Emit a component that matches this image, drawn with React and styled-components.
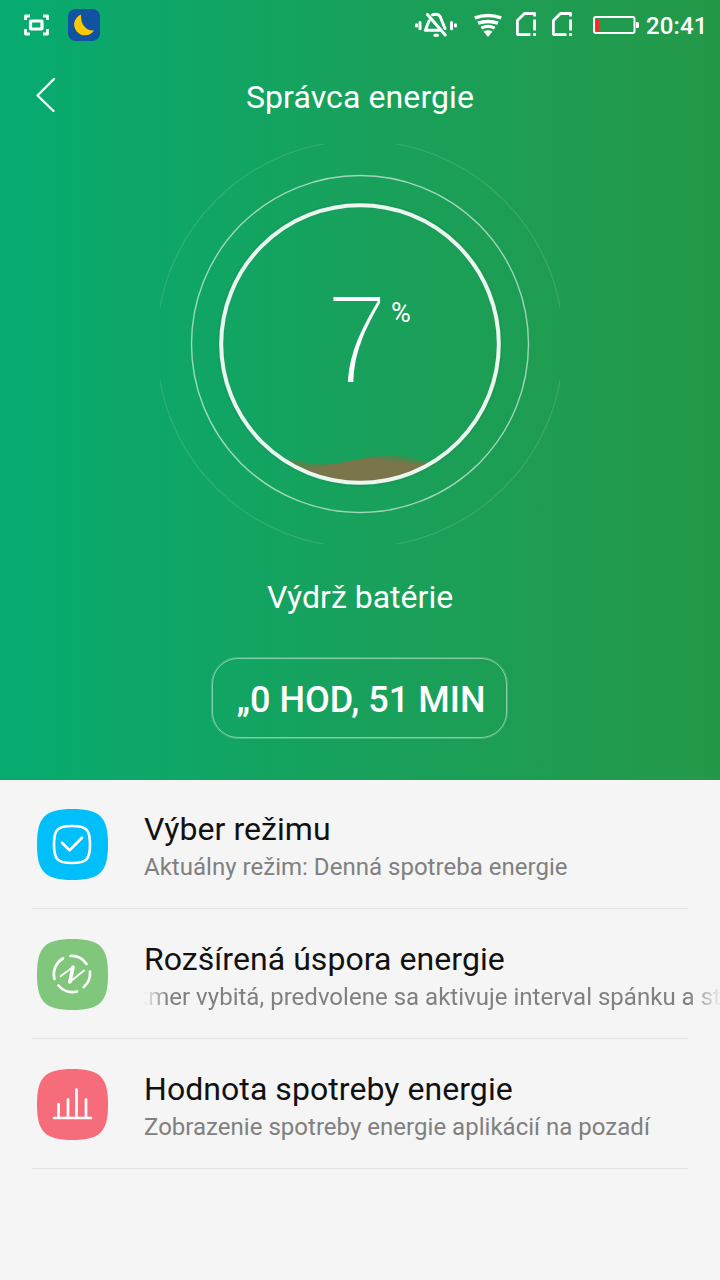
import React from "react";
import styled, { createGlobalStyle } from "styled-components";

const GlobalStyle = createGlobalStyle`
  body {
    margin: 0;
    background-color: #f5f5f5;
    font-family: Roboto, "Liberation Sans", sans-serif;
  }
`;

const Screen = styled.div`
  width: 720px;
  height: 1280px;
  overflow: hidden;
  background-color: #f5f5f5;
`;

const Hero = styled.header`
  display: flex;
  flex-direction: column;
  align-items: center;
  height: 780px;
  color: #ffffff;
  background-image: linear-gradient(90deg, #06ab70 0%, #18a15c 50%, #249848 100%);
`;

const StatusBar = styled.div`
  display: flex;
  align-items: center;
  justify-content: space-between;
  box-sizing: border-box;
  width: 100%;
  height: 50px;
  padding: 0 14px 0 24px;
`;

const StatusGroup = styled.div`
  display: flex;
  align-items: center;
`;

const StatusIcon = styled.svg`
  display: block;
  margin-right: ${(props) => props.$gap || 0}px;
`;

const Clock = styled.span`
  width: 60px;
  padding-top: 2px;
  font-size: 24px;
  font-weight: 500;
  line-height: 48px;
  letter-spacing: 0.1px;
  white-space: nowrap;
`;

const TitleBar = styled.div`
  display: grid;
  grid-template-columns: 92px 1fr 92px;
  align-items: center;
  width: 100%;
  height: 94px;
`;

const BackButton = styled.button`
  height: 94px;
  padding: 0 0 2px 34px;
  border: 0;
  background: none;
  text-align: left;
`;

const Title = styled.h1`
  margin: 0;
  font-size: 32px;
  font-weight: 400;
  line-height: 94px;
  letter-spacing: 0.1px;
  text-align: center;
`;

const Gauge = styled.div`
  position: relative;
  width: 400px;
  height: 400px;
`;

const GaugeDrawing = styled.svg`
  display: block;
`;

const Reading = styled.div`
  position: absolute;
  top: 127px;
  left: 165px;
  display: flex;
  align-items: flex-start;
`;

/* the outline in the background colour thins the digit down to a hairline */
const Level = styled.span`
  width: 66px;
  font-family: "Liberation Sans", Arial, sans-serif;
  font-size: 131px;
  line-height: 138px;
  transform: scaleX(0.87);
  transform-origin: 0 0;
  -webkit-text-stroke: 5.9px #18a15c;
`;

const Percent = styled.span`
  padding-top: 25px;
  font-size: 27px;
  line-height: 34px;
`;

const Caption = styled.p`
  margin: 34px 0 0;
  font-size: 32px;
  line-height: 38px;
`;

const TimeLeft = styled.div`
  box-sizing: border-box;
  width: 295px;
  height: 80px;
  margin: 42px 1px 0 0;
  border: 1px solid rgba(255, 255, 255, 0.48);
  border-radius: 26px;
  box-shadow: 0 0 0 1px rgba(255, 255, 255, 0.2);
  font-size: 36px;
  font-weight: 500;
  line-height: 82px;
  text-align: center;
  text-indent: 3px;
  white-space: nowrap;
`;

const List = styled.ul`
  margin: 0;
  padding: 0 0 0 32px;
  list-style: none;
`;

const Item = styled.li`
  display: flex;
  box-sizing: border-box;
  height: 130px;
  padding: 28px 0 0 4px;
  background: linear-gradient(#e2e2e2, #e2e2e2) 0 128px / 656px 1px no-repeat;
`;

const Badge = styled.svg`
  flex: none;
  width: 72px;
  height: 72px;
  margin-right: 36px;
`;

const ItemText = styled.div`
  flex: 1;
  min-width: 0;
`;

const ItemTitle = styled.h2`
  margin: 2px 0 0;
  color: #111111;
  font-size: 32px;
  font-weight: 400;
  line-height: 38px;
  letter-spacing: 0.06px;
`;

const ItemNote = styled.p`
  display: flex;
  margin: 4px 0 0;
  overflow: hidden;
  color: #808080;
  font-size: 24px;
  line-height: 30px;
  letter-spacing: 0.02px;
  white-space: nowrap;
  ${(props) =>
    props.$scrolling &&
    "mask-image: linear-gradient(90deg, transparent 0, #000 24px, #000 545px, transparent 578px);"}
`;

const NoteText = styled.span`
  margin-left: ${(props) => props.$shift || 0}px;
`;

const squircle =
  "M36.5 1C64 1 72 9 72 36.5C72 64 64 72 36.5 72C9 72 1 64 1 36.5C1 9 9 1 36.5 1Z";

const SimIcon = ({ gap }) => (
  <StatusIcon $gap={gap} width="20" height="26" viewBox="0 0 20 26" fill="none" stroke="#fff" strokeWidth="2.8">
    <path d="M18.6 4.5V1.5H8.5L1.4 8.5V21.5Q1.4 22.7 2.8 22.7H14.5" strokeLinejoin="round" />
    <path d="M18.6 7.5V18.5M18.6 21V24" />
  </StatusIcon>
);

const items = [
  {
    title: "Výber režimu",
    note: "Aktuálny režim: Denná spotreba energie",
    color: "#00bffa",
    icon: (
      <>
        <path d="M36 18C50.5 18 54 21.5 54 36.5C54 51.5 50.5 55 36 55C21.5 55 18 51.5 18 36.5C18 21.5 21.5 18 36 18Z" />
        <path d="M26 34.8L33.6 42.3L46 29.8" />
      </>
    ),
  },
  {
    title: "Rozšírená úspora energie",
    note: "kmer vybitá, predvolene sa aktivuje interval spánku a st",
    scrolling: true,
    shift: -8,
    color: "#81c77b",
    icon: (
      <>
        <path d="M34.5 18A18.3 18.3 0 0 1 50.5 26M54 33.5A18.3 18.3 0 0 1 47.8 49M41 53.5A18.3 18.3 0 0 1 22.5 47.5M18.5 41A18.3 18.3 0 0 1 27 20.5" />
        <path d="M24.5 38.3L37.5 28.8L33.5 44.300L48 32.500" strokeWidth="1.8" />
        <path d="M37 29.300L33.800 43.800" strokeWidth="3.6" />
      </>
    ),
  },
  {
    title: "Hodnota spotreby energie",
    note: "Zobrazenie spotreby energie aplikácií na pozadí",
    color: "#f66c7b",
    icon: <path d="M18 50H55M22.5 50V36M32 50V31.5M40.5 50V21.5M50 50V31.5" />,
  },
];

const App = () => (
  <Screen>
    <GlobalStyle />
    <Hero>
      <StatusBar>
        <StatusGroup>
          <StatusIcon $gap={19} width="25" height="22" viewBox="0 0 25 22" fill="none" stroke="#fff">
            <path
              d="M1.5 6V2H6M19 2H23.5V6M23.5 15V20H19M6 20H1.5V15"
              strokeWidth="2.8"
              strokeLinejoin="round"
            />
            <rect x="6.5" y="7" width="11.5" height="8" strokeWidth="3.2" rx="0.5" />
          </StatusIcon>
          <StatusIcon width="32" height="32" viewBox="0 0 32 32">
            <rect width="32" height="32" rx="7.5" fill="#1053a3" />
            <path d="M13 5.5A10.8 10.8 0 1 0 26 21.5C17.5 22 12.5 15 13 5.5Z" fill="#ffc800" />
          </StatusIcon>
        </StatusGroup>
        <StatusGroup>
          <StatusIcon $gap={17} width="42" height="26" viewBox="0 0 42 26" fill="none" stroke="#fff" strokeWidth="3" strokeLinecap="round">
            <path d="M1.5 12.8V14M5 10.5V16.8M36.5 10.5V16.8M40.5 12.8V14" />
            <path
              d="M14 9L10.3 18.3H25.5M17.5 2.8C23 0.8 25.5 3.5 26.5 8L30 16.5M12.5 2.5L30.2 23M19.8 23.3H22.5"
              strokeLinejoin="round"
            />
          </StatusIcon>
          <StatusIcon $gap={14} width="28" height="26" viewBox="0 0 28 26" fill="none" stroke="#fff" strokeWidth="3.5">
            <path d="M0.8 5.9Q14 1.1 27.2 5.9M4 11.2Q14 7.8 24 11.2" />
            <path d="M7.3 16.1Q14 12.8 20.7 16.1" strokeWidth="3.2" />
            <path d="M9.5 19.5Q14 17 18.5 19.5L14 25Z" fill="#fff" stroke="none" />
          </StatusIcon>
          <SimIcon gap={16} />
          <SimIcon gap={21} />
          <StatusIcon $gap={7} width="46" height="18" viewBox="0 0 46 18">
            <rect x="1" y="1" width="40.5" height="16" rx="2" fill="none" stroke="#fff" strokeWidth="2" />
            <rect x="3" y="3" width="3" height="12" fill="#f42c20" />
            <path d="M43 6H44.5Q46 6 46 7.5V10.5Q46 12 44.5 12H43Z" fill="#fff" />
          </StatusIcon>
          <Clock>20:41</Clock>
        </StatusGroup>
      </StatusBar>

      <TitleBar>
        <BackButton aria-label="Späť">
          <svg width="24" height="38" viewBox="0 0 24 38" fill="none" stroke="#fff" strokeWidth="2.4" strokeLinecap="round" strokeLinejoin="round">
            <path d="M20 3L3.5 19.5L19.5 35" />
          </svg>
        </BackButton>
        <Title>Správca energie</Title>
      </TitleBar>

      <Gauge>
        <GaugeDrawing width="400" height="400" viewBox="0 0 400 400" fill="none">
          <clipPath id="tank">
            <circle cx="200" cy="200" r="138" />
          </clipPath>
          <circle cx="200" cy="200" r="203.5" stroke="#fff" strokeOpacity="0.12" strokeWidth="1.3" />
          <circle cx="200" cy="200" r="168.5" stroke="#fff" strokeOpacity="0.58" strokeWidth="1.4" />
          <g clipPath="url(#tank)">
            <path
              d="M120 314C140 317 150 321 170 320C190 319 205 312 227 311.5C245 311 258 316 275 320V345H120Z"
              fill="#50874c"
            />
            <path
              d="M120 320C145 323 155 325 172 320.5C190 317 200 314 213 314C230 315 245 319 275 322V345H120Z"
              fill="#7a754a"
            />
          </g>
          <circle cx="200" cy="200" r="139.5" stroke="#000" strokeOpacity="0.035" strokeWidth="7" />
          <circle cx="200" cy="200" r="138.8" stroke="#eaf6ef" strokeWidth="4" />
        </GaugeDrawing>
        <Reading>
          <Level>7</Level>
          <Percent>%</Percent>
        </Reading>
      </Gauge>

      <Caption>Výdrž batérie</Caption>
      <TimeLeft>„0 HOD, 51 MIN</TimeLeft>
    </Hero>

    <List>
      {items.map((item) => (
        <Item key={item.title}>
          <Badge viewBox="0 0 72 72" fill="none" stroke="#fff" strokeWidth="2.7" strokeLinecap="round" strokeLinejoin="round">
            <path d={squircle} fill={item.color} stroke="none" />
            {item.icon}
          </Badge>
          <ItemText>
            <ItemTitle>{item.title}</ItemTitle>
            <ItemNote $scrolling={item.scrolling}>
              <NoteText $shift={item.shift}>{item.note}</NoteText>
            </ItemNote>
          </ItemText>
        </Item>
      ))}
    </List>
  </Screen>
);

export default App;
